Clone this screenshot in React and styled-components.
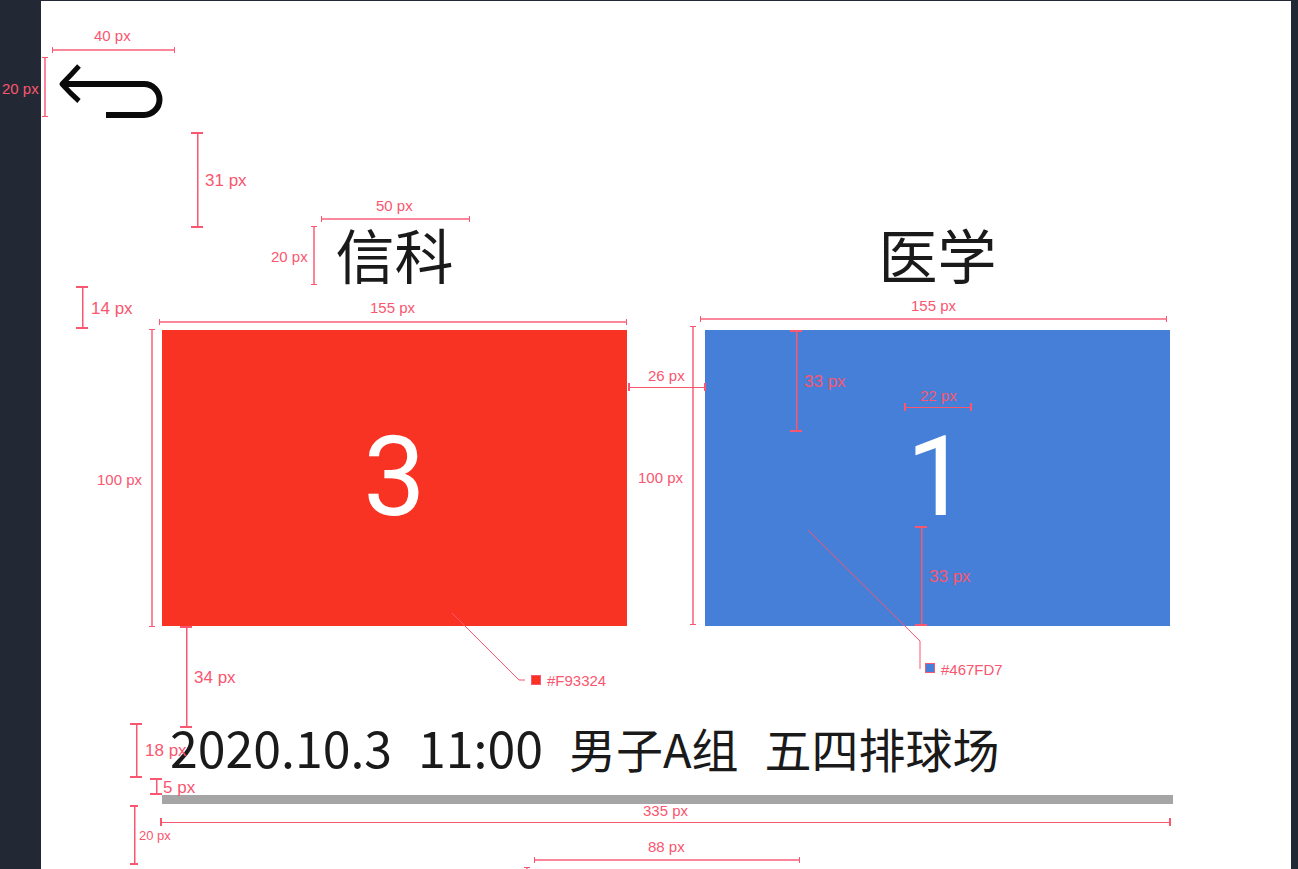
import React from "react";
import styled, { createGlobalStyle, css } from "styled-components";

const PINK = "#f9566f";
const PINK_SOFT = "rgba(249, 86, 111, 0.7)";
const PINK_FAINT = "rgba(249, 86, 111, 0.5)";

const GlobalStyle = createGlobalStyle`
  *, *::before, *::after { box-sizing: border-box; }
  body {
    margin: 0;
    background: #222935;
    font-family: "Liberation Sans", "Noto Sans CJK SC", sans-serif;
  }
`;

const Page = styled.div`
  position: relative;
  height: 100vh;
  overflow: hidden;
  padding: 1px 7px 0 41px;
  background: #222935;
`;

const Artboard = styled.main`
  min-height: 100%;
  background: #fff;
`;

const TopBar = styled.header`
  padding: 56px 11px 0;
`;

const BackButton = styled.button`
  display: block;
  padding: 0;
  border: 0;
  background: none;
  cursor: pointer;

  svg { display: block; overflow: visible; }
`;

const Match = styled.section`
  padding: 110px 118px 0 121px;
`;

const Teams = styled.div`
  display: grid;
  grid-template-columns: 1fr 1fr;
  column-gap: 78px;
  padding-right: 3px;
`;

const Team = styled.article`
  display: flex;
  flex-direction: column;
  gap: 49px;
`;

const TeamName = styled.h2`
  margin: 0;
  color: #1a1a1a;
  font: 400 59px/54px "Noto Sans CJK SC", sans-serif;
  text-align: center;
`;

const Score = styled.div`
  display: flex;
  align-items: center;
  justify-content: center;
  height: 296px;
  padding-bottom: 2px;
  background: ${(p) => p.$color};
  color: #fff;
  font-family: Roboto, sans-serif;
  font-size: 111px;
  line-height: 1;
`;

const Schedule = styled.p`
  display: flex;
  align-items: baseline;
  gap: 26px;
  height: 44px;
  margin: 98px 0 27px;
  padding-left: 8px;
  color: #1a1a1a;
  font: 400 47px/44px "Noto Sans CJK SC", sans-serif;
  white-space: nowrap;
`;

const Moment = styled.time`
  font-size: 50px;
`;

const Divider = styled.hr`
  height: 9px;
  margin: 0;
  border: 0;
  background: #a5a5a5;
`;

const Annotations = styled.div`
  position: absolute;
  inset: 0;
  color: ${PINK};
  pointer-events: none;
`;

const capWidth = (p) => (p.$bold ? "2px" : "1px");

const Ruler = styled.span`
  position: absolute;
  left: ${(p) => p.$x}px;
  top: ${(p) => p.$y}px;

  &::before {
    content: "";
    position: absolute;
  }

  ${(p) =>
    p.$vertical
      ? css`
          width: ${p.$cap}px;
          height: ${p.$length}px;
          border: solid ${PINK};
          border-width: ${capWidth(p)} 0;
          &::before {
            top: 0;
            bottom: 0;
            left: ${p.$bold ? "50%" : "calc(50% - 1px)"};
            border-left: 1px solid ${p.$bold ? PINK : PINK_SOFT};
            border-right: 1px solid ${p.$bold ? PINK_FAINT : PINK_SOFT};
          }
        `
      : css`
          width: ${p.$length}px;
          height: ${p.$cap}px;
          border: solid ${PINK};
          border-width: 0 ${capWidth(p)};
          &::before {
            left: 0;
            right: 0;
            top: ${p.$bold ? "50%" : "calc(50% - 1px)"};
            border-top: ${p.$bold ? `1px solid ${PINK}` : `2px solid ${PINK_SOFT}`};
          }
        `}
`;

const labelSizes = { small: 13, regular: 15, large: 17 };

const Label = styled.span`
  position: absolute;
  left: ${(p) => p.$x}px;
  top: ${(p) => p.$y}px;
  font-size: ${(p) => labelSizes[p.$size]}px;
  line-height: 16px;
  white-space: nowrap;
`;

const Swatch = styled.span`
  position: absolute;
  left: ${(p) => p.$x}px;
  top: ${(p) => p.$y}px;
  width: 10px;
  height: 10px;
  border: 1px solid ${PINK};
  background: ${(p) => p.$color};
`;

const Leaders = styled.svg`
  position: absolute;
  left: 0;
  top: 0;
  width: 100%;
  height: 100%;
  fill: none;
  stroke: ${PINK};
`;

const teams = [
  { name: "信科", score: 3, color: "#f93324" },
  { name: "医学", score: 1, color: "#467fd7" },
];

const rulers = [
  { x: 52, y: 47, length: 123, cap: 6 },
  { x: 321, y: 216, length: 149, cap: 6 },
  { x: 159, y: 319, length: 468, cap: 6 },
  { x: 700, y: 316, length: 467, cap: 6 },
  { x: 534, y: 857, length: 266, cap: 6 },
  { x: 628, y: 383, length: 78, cap: 8, bold: true },
  { x: 904, y: 403, length: 68, cap: 8, bold: true },
  { x: 160, y: 818, length: 1011, cap: 8, bold: true },
  { x: 42, y: 57, length: 60, cap: 6, vertical: true },
  { x: 311, y: 226, length: 59, cap: 6, vertical: true },
  { x: 149, y: 329, length: 298, cap: 6, vertical: true },
  { x: 690, y: 326, length: 299, cap: 6, vertical: true },
  { x: 524, y: 867, length: 60, cap: 6, vertical: true },
  { x: 191, y: 132, length: 96, cap: 12, vertical: true, bold: true },
  { x: 76, y: 286, length: 43, cap: 12, vertical: true, bold: true },
  { x: 790, y: 330, length: 102, cap: 12, vertical: true, bold: true },
  { x: 915, y: 526, length: 100, cap: 12, vertical: true, bold: true },
  { x: 180, y: 626, length: 102, cap: 12, vertical: true, bold: true },
  { x: 130, y: 723, length: 55, cap: 12, vertical: true, bold: true },
  { x: 150, y: 778, length: 17, cap: 12, vertical: true, bold: true },
  { x: 130, y: 805, length: 60, cap: 8, vertical: true, bold: true },
];

const labels = [
  { text: "40 px", x: 94, y: 28 },
  { text: "20 px", x: 2, y: 81 },
  { text: "31 px", x: 205, y: 173, size: "large" },
  { text: "50 px", x: 376, y: 198 },
  { text: "20 px", x: 271, y: 249 },
  { text: "14 px", x: 91, y: 301, size: "large" },
  { text: "155 px", x: 370, y: 300 },
  { text: "155 px", x: 911, y: 298 },
  { text: "26 px", x: 648, y: 368 },
  { text: "33 px", x: 804, y: 374, size: "large" },
  { text: "22 px", x: 920, y: 388 },
  { text: "100 px", x: 97, y: 472 },
  { text: "100 px", x: 638, y: 470 },
  { text: "33 px", x: 929, y: 569, size: "large" },
  { text: "#F93324", x: 547, y: 673 },
  { text: "#467FD7", x: 941, y: 662 },
  { text: "34 px", x: 194, y: 670, size: "large" },
  { text: "18 px", x: 145, y: 743, size: "large" },
  { text: "5 px", x: 163, y: 780, size: "large" },
  { text: "335 px", x: 643, y: 803 },
  { text: "20 px", x: 139, y: 828, size: "small" },
  { text: "88 px", x: 648, y: 839 },
];

export default function App() {
  return (
    <Page>
      <GlobalStyle />
      <Artboard>
        <TopBar>
          <BackButton type="button" aria-label="返回">
            <svg width="122" height="60" viewBox="0 0 122 60" fill="none" stroke="#0a0a0a">
              <path strokeWidth="6" d="M12 27H92a15.5 15.5 0 0 1 0 31H54" />
              <path strokeWidth="5" strokeLinejoin="round" d="M27 9Q19 18 10 27Q19 37 27 44" />
            </svg>
          </BackButton>
        </TopBar>
        <Match>
          <Teams>
            {teams.map((team) => (
              <Team key={team.name}>
                <TeamName>{team.name}</TeamName>
                <Score $color={team.color}>{team.score}</Score>
              </Team>
            ))}
          </Teams>
          <Schedule>
            <Moment>2020.10.3</Moment>
            <Moment>11:00</Moment>
            <span>男子A组</span>
            <span>五四排球场</span>
          </Schedule>
          <Divider />
        </Match>
      </Artboard>
      <Annotations>
        <Leaders>
          <path d="M452 613L519 680H525" />
          <path d="M808 530L920 641V669" />
        </Leaders>
        {rulers.map((r) => (
          <Ruler
            key={`${r.x}-${r.y}`}
            $x={r.x}
            $y={r.y}
            $length={r.length}
            $cap={r.cap}
            $vertical={r.vertical}
            $bold={r.bold}
          />
        ))}
        {labels.map((l) => (
          <Label key={`${l.x}-${l.y}`} $x={l.x} $y={l.y} $size={l.size ?? "regular"}>
            {l.text}
          </Label>
        ))}
        <Swatch $x={531} $y={675} $color="#f93324" />
        <Swatch $x={925} $y={663} $color="#467fd7" />
      </Annotations>
    </Page>
  );
}
